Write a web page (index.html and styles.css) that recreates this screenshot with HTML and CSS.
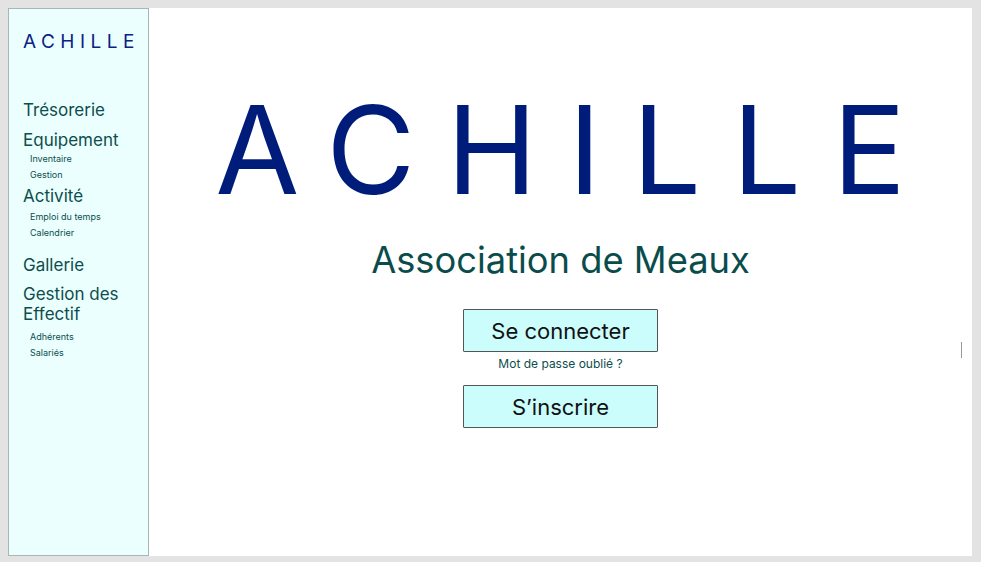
FILE: index.html
```html
<!DOCTYPE html>
<html lang="fr">
<head>
<meta charset="utf-8">
<title>Achille</title>
<link rel="stylesheet" href="styles.css">
</head>
<body>
<div class="app">
  <aside class="sidebar">
    <div class="brand">ACHILLE</div>
    <nav class="nav">
      <div class="group">
        <div class="nav-item">Trésorerie</div>
      </div>
      <div class="group g-equip">
        <div class="nav-item">Equipement</div>
        <div class="subs">
          <div class="sub">Inventaire</div>
          <div class="sub">Gestion</div>
        </div>
      </div>
      <div class="group g-act">
        <div class="nav-item">Activité</div>
        <div class="subs">
          <div class="sub">Emploi du temps</div>
          <div class="sub">Calendrier</div>
        </div>
      </div>
      <div class="group g-gal">
        <div class="nav-item">Gallerie</div>
      </div>
      <div class="group g-eff">
        <div class="nav-item">Gestion des Effectif</div>
        <div class="subs">
          <div class="sub">Adhérents</div>
          <div class="sub">Salariés</div>
        </div>
      </div>
    </nav>
  </aside>
  <main class="main">
    <h1 class="title">ACHILLE</h1>
    <h2 class="subtitle">Association de Meaux</h2>
    <button class="btn btn-login">Se connecter</button>
    <a class="forgot">Mot de passe oublié ?</a>
    <button class="btn">S’inscrire</button>
    <span class="caret"></span>
  </main>
</div>
</body>
</html>
```
FILE: styles.css
```css
html, body {
  margin: 0;
  padding: 0;
}
body {
  background: #e3e3e3;
  padding: 8px 0 0 8px;
  font-family: Inter, "Noto Sans", sans-serif;
}
.app {
  display: flex;
  width: 964px;
  height: 548px;
  background: #ffffff;
}
.sidebar {
  box-sizing: border-box;
  width: 141px;
  height: 100%;
  background: #eafffe;
  border: 1px solid #aab6b6;
  padding: 0 0 0 14px;
}
.brand {
  margin-top: 21px;
  font-size: 19px;
  line-height: 24px;
  letter-spacing: 0.29em;
  color: #0b2184;
}
.nav {
  margin-top: 46px;
  color: #0d4d4d;
}
.group {
  margin-top: 10px;
}
.group:first-child {
  margin-top: 0;
}
.g-act {
  margin-top: 3px;
}
.g-gal {
  margin-top: 14px;
}
.g-eff {
  margin-top: 9px;
}
.nav-item {
  font-size: 17px;
  line-height: 20px;
  padding-right: 10px;
}
.subs {
  margin-top: 1px;
}
.g-act .subs {
  margin-top: 3px;
}
.g-eff .subs {
  margin-top: 5px;
}
.sub {
  font-size: 9px;
  line-height: 16px;
  padding-left: 7px;
}
.main {
  position: relative;
  flex: 1;
  display: flex;
  flex-direction: column;
  align-items: center;
}
.title {
  margin: 77px -0.255em 0 0;
  font-weight: 400;
  font-size: 122px;
  line-height: 130px;
  letter-spacing: 0.255em;
  color: #001c7a;
}
.subtitle {
  margin: 23px 0 0 0;
  font-weight: 400;
  font-size: 36.3px;
  line-height: 44px;
  color: #0a4c4c;
}
.btn {
  box-sizing: border-box;
  width: 195px;
  height: 43px;
  background: #ccfdfd;
  border: 1px solid #555555;
  border-radius: 1px;
  font-family: Inter, "Noto Sans", sans-serif;
  font-size: 22px;
  color: #111111;
  padding: 0;
}
.btn-login {
  margin-top: 27px;
}
.forgot {
  font-size: 12px;
  line-height: 16px;
  margin: 4px 0 13px 0;
  color: #0d4d4d;
}
.caret {
  position: absolute;
  left: 812px;
  top: 334px;
  width: 1px;
  height: 16px;
  background: #9a9a9a;
}
```
